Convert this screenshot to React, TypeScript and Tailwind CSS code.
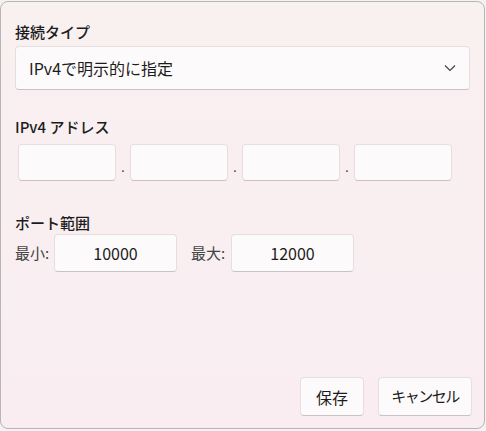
const font = { fontFamily: '"Noto Sans CJK JP", "Noto Sans", sans-serif' }

const box =
  'bg-[#fdfafb] border border-[#e6dfe1] border-b-[#c9c2c4] rounded-[4px]'

function IpBox() {
  return <div className={`${box} w-[98px] h-[37px]`} />
}

function Dot() {
  return <span className="w-[14px] text-center text-[12px] leading-none text-[#333] self-end mb-[8px]">.</span>
}

export default function App() {
  return (
    <div className="w-[486px] h-[431px] bg-[#f3f3f3] relative overflow-hidden" style={font}>
      <div className="absolute left-[-1px] top-[40px] w-[3px] h-[22px] bg-[#d93b3b]" />
      <div className="absolute inset-0 top-[1px] bottom-[2px] right-[1px] rounded-[8px] border border-[#b9b4b5] bg-gradient-to-b from-[#f9f0f0] to-[#f9edf1] flex flex-col px-[14px] pt-[19px] pb-[12px] text-[#1c1c1c]">
        <div className="text-[15px] font-medium leading-[22px]">接続タイプ</div>
        <div className={`${box} mt-[3px] h-[44px] flex items-center justify-between pl-[13px] pr-[13px]`}>
          <span className="text-[16px] leading-none">IPv4で明示的に指定</span>
          <svg width="12" height="8" viewBox="0 0 12 8" className="text-[#444]">
            <polyline points="1,1.5 6,6.5 11,1.5" fill="none" stroke="currentColor" strokeWidth="1.2" />
          </svg>
        </div>

        <div className="mt-[26px] text-[15px] font-medium leading-[22px]">IPv4 アドレス</div>
        <div className="mt-[6px] ml-[3px] flex">
          <IpBox />
          <Dot />
          <IpBox />
          <Dot />
          <IpBox />
          <Dot />
          <IpBox />
        </div>

        <div className="mt-[31px] text-[15px] font-medium leading-[22px]">ポート範囲</div>
        <div className="flex items-center text-[15px] text-[#444]">
          <span className="w-[39px]">最小:</span>
          <div className={`${box} w-[123px] h-[38px] flex items-center justify-center text-[16px] text-[#1c1c1c]`}>10000</div>
          <span className="ml-[14px] w-[40px]">最大:</span>
          <div className={`${box} w-[123px] h-[38px] flex items-center justify-center text-[16px] text-[#1c1c1c]`}>12000</div>
        </div>

        <div className="mt-auto flex justify-end gap-[14px] mr-[-2px]">
          <button className={`${box} w-[64px] h-[39px] text-[16px]`}>保存</button>
          <button className={`${box} w-[94px] h-[39px] text-[15px] tracking-[-1.5px]`}>キャンセル</button>
        </div>
      </div>
    </div>
  )
}
